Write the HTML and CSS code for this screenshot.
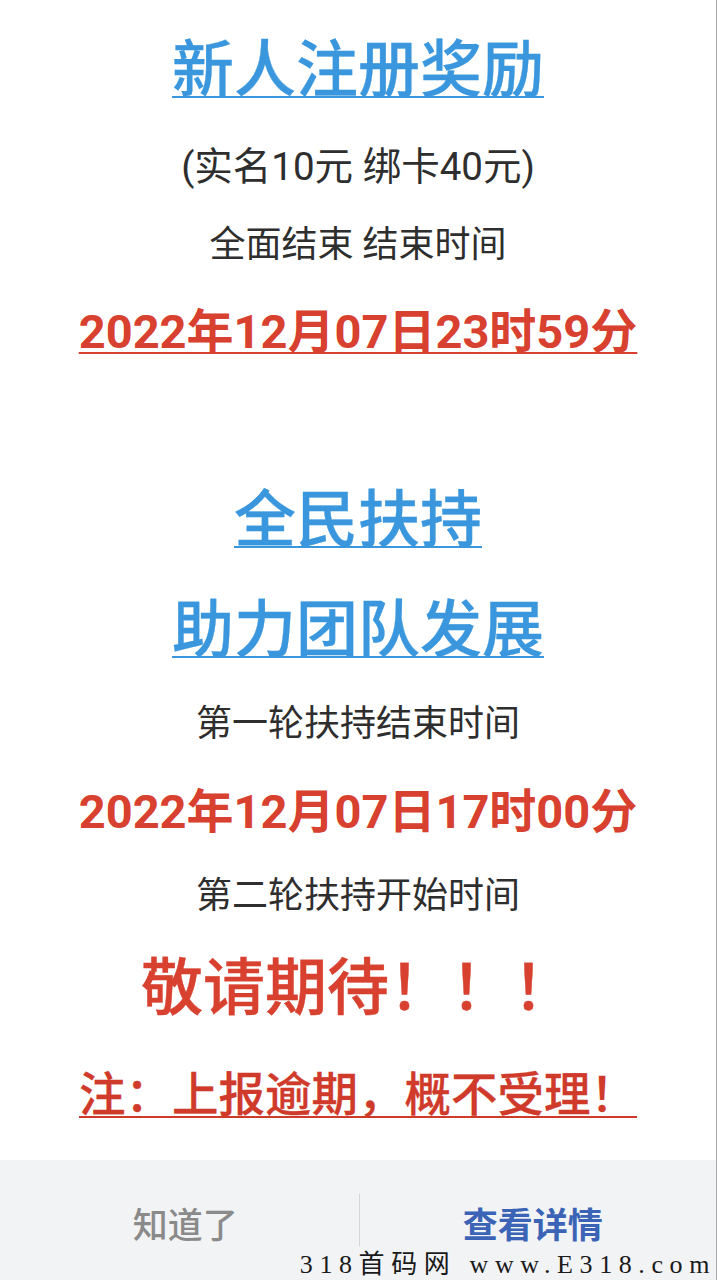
FILE: index.html
```html
<!DOCTYPE html>
<html lang="zh-CN">
<head>
<meta charset="utf-8">
<title>公告</title>
<link rel="stylesheet" href="styles.css">
</head>
<body>
<div class="page">
  <div class="content">
    <div class="title t1"><span class="ul">新人注册奖励</span></div>
    <div class="line l2">(实名10元 绑卡40元)</div>
    <div class="line l3">全面结束 结束时间</div>
    <div class="date d1"><span class="ul">2022年12月07日23时59分</span></div>
    <div class="title t2"><span class="ul">全民扶持</span></div>
    <div class="title t3"><span class="ul">助力团队发展</span></div>
    <div class="line l7">第一轮扶持结束时间</div>
    <div class="date d2">2022年12月07日17时00分</div>
    <div class="line l9">第二轮扶持开始时间</div>
    <div class="expect">敬请期待！！！</div>
    <div class="note"><span class="ul">注：上报逾期，概不受理！</span></div>
  </div>
  <div class="bar">
    <div class="btn btn-known">知道了</div>
    <div class="divider"></div>
    <div class="btn btn-detail">查看详情</div>
  </div>
  <div class="watermark">318首码网 www.E318.com</div>
</div>
</body>
</html>
```

FILE: styles.css
```css
html, body {
  margin: 0;
  padding: 0;
  background: #ffffff;
}
body {
  font-family: Roboto, "Noto Sans CJK SC", sans-serif;
}
.page {
  position: relative;
  width: 716px;
  height: 1280px;
  border-right: 1px solid #a8a8a8;
  display: flex;
  flex-direction: column;
  overflow: hidden;
}
.content {
  flex: 1;
  text-align: center;
}
.ul {
  text-decoration: underline;
  text-decoration-thickness: 2px;
}
.title {
  font-family: "Noto Sans CJK SC", sans-serif;
  font-size: 62px;
  font-weight: 500;
  color: #3a97dd;
  height: 80px;
  line-height: 80px;
  -webkit-text-stroke: 0.3px #3a97dd;
}
.title .ul {
  text-underline-offset: 4px;
}
.line {
  font-size: 36px;
  color: #2e2e2e;
  height: 50px;
  line-height: 50px;
}
.l2 {
  font-size: 38.5px;
}
.date {
  font-size: 47px;
  font-weight: 700;
  color: #d8402f;
  height: 60px;
  line-height: 60px;
}
.date .ul {
  text-underline-offset: 4px;
}
.t1 { margin-top: 25px; }
.l2 { margin-top: 37px; }
.l3 { margin-top: 28px; }
.d1 { margin-top: 32px; }
.t2 { margin-top: 113px; }
.t3 { margin-top: 30px; }
.l7 { margin-top: 34px; }
.d2 { margin-top: 33px; }
.l9 { margin-top: 29px; }
.expect {
  font-family: "Noto Sans CJK SC", sans-serif;
  font-size: 62px;
  font-weight: 500;
  color: #d8402f;
  height: 80px;
  line-height: 80px;
  margin-top: 22px;
  -webkit-text-stroke: 0.4px #d8402f;
}
.note {
  font-family: "Noto Sans CJK SC", sans-serif;
  font-size: 46.5px;
  font-weight: 500;
  color: #cf3a2b;
  height: 60px;
  line-height: 60px;
  margin-top: 38px;
  -webkit-text-stroke: 0.3px #cf3a2b;
}
.note .ul {
  text-underline-offset: 5px;
}
.bar {
  height: 120px;
  background: #f2f3f5;
  display: flex;
  align-items: center;
}
.btn {
  flex: 1;
  text-align: center;
  font-family: "Noto Sans CJK SC", sans-serif;
  font-size: 35px;
  line-height: 50px;
  padding-top: 6px;
}
.btn-known {
  color: #8a8a8a;
  font-weight: 500;
  padding-left: 12px;
}
.btn-detail {
  color: #3b64b6;
  font-weight: 700;
  padding-right: 10px;
}
.divider {
  width: 1px;
  height: 52px;
  background: #d6d7da;
}
.watermark {
  position: absolute;
  right: 0;
  bottom: 0;
  font-family: "Liberation Serif", "Noto Sans CJK SC", serif;
  font-size: 26px;
  line-height: 30px;
  letter-spacing: 6.6px;
  color: #1a1a1a;
  white-space: nowrap;
}
```
